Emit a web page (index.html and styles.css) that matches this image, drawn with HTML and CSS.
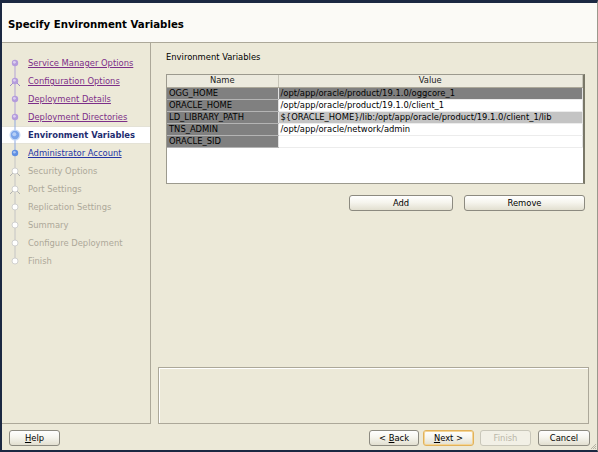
FILE: index.html
```html
<!DOCTYPE html>
<html>
<head>
<meta charset="utf-8">
<link rel="stylesheet" href="styles.css">
</head>
<body>
<div class="window">
  <div class="header"><span class="title">Specify Environment Variables</span></div>
  <div class="main">
    <div class="sidebar">
      <div class="step done first">
        <svg class="ico" width="26" height="18" viewBox="0 0 26 18"><line x1="13" y1="9" x2="13" y2="18" stroke="#b3a3d6"/><circle cx="13" cy="9" r="3.2" fill="#b49cdc"/><circle cx="12.4" cy="8.3" r="1.4" fill="#dccff0"/></svg>
        <a class="lbl">Service Manager Options</a>
      </div>
      <div class="step done">
        <svg class="ico" width="26" height="18" viewBox="0 0 26 18"><line x1="13" y1="0" x2="13" y2="18" stroke="#b3a3d6"/><line x1="13" y1="9" x2="8" y2="14" stroke="#9d8ac8"/><line x1="13" y1="9" x2="18" y2="14" stroke="#9d8ac8"/><circle cx="13" cy="9" r="3.2" fill="#b49cdc"/><circle cx="12.4" cy="8.3" r="1.4" fill="#dccff0"/></svg>
        <a class="lbl">Configuration Options</a>
      </div>
      <div class="step done">
        <svg class="ico" width="26" height="18" viewBox="0 0 26 18"><line x1="13" y1="0" x2="13" y2="18" stroke="#b3a3d6"/><circle cx="13" cy="9" r="3.2" fill="#b49cdc"/><circle cx="12.4" cy="8.3" r="1.4" fill="#dccff0"/></svg>
        <a class="lbl">Deployment Details</a>
      </div>
      <div class="step done">
        <svg class="ico" width="26" height="18" viewBox="0 0 26 18"><line x1="13" y1="0" x2="13" y2="9" stroke="#b3a3d6"/><line x1="13" y1="9" x2="13" y2="18" stroke="#8fa9e0"/><circle cx="13" cy="9" r="3.2" fill="#b49cdc"/><circle cx="12.4" cy="8.3" r="1.4" fill="#dccff0"/></svg>
        <a class="lbl">Deployment Directories</a>
      </div>
      <div class="step current">
        <svg class="ico" width="26" height="18" viewBox="0 0 26 18"><line x1="13" y1="0" x2="13" y2="18" stroke="#8fa9e0"/><circle cx="13" cy="9" r="5.5" fill="#c4d8f6"/><circle cx="13" cy="9" r="4.2" fill="#7aa4ea"/><circle cx="12.3" cy="8.2" r="2" fill="#b6cff6"/></svg>
        <span class="lbl">Environment Variables</span>
      </div>
      <div class="step next">
        <svg class="ico" width="26" height="18" viewBox="0 0 26 18"><line x1="13" y1="0" x2="13" y2="9" stroke="#8fa9e0"/><line x1="13" y1="9" x2="13" y2="18" stroke="#c4c4c4"/><circle cx="13" cy="9" r="3.2" fill="#5f8fe2"/><circle cx="12.4" cy="8.3" r="1.3" fill="#a9c4f2"/></svg>
        <a class="lbl">Administrator Account</a>
      </div>
      <div class="step todo">
        <svg class="ico" width="26" height="18" viewBox="0 0 26 18"><line x1="13" y1="0" x2="13" y2="18" stroke="#c4c4c4"/><line x1="13" y1="9" x2="8" y2="14" stroke="#b0b0b0"/><line x1="13" y1="9" x2="18" y2="14" stroke="#b0b0b0"/><circle cx="13" cy="9" r="3" fill="#ffffff" stroke="#c8c8c8" stroke-width="0.8"/></svg>
        <span class="lbl">Security Options</span>
      </div>
      <div class="step todo">
        <svg class="ico" width="26" height="18" viewBox="0 0 26 18"><line x1="13" y1="0" x2="13" y2="18" stroke="#c4c4c4"/><line x1="13" y1="9" x2="8" y2="14" stroke="#b0b0b0"/><line x1="13" y1="9" x2="18" y2="14" stroke="#b0b0b0"/><circle cx="13" cy="9" r="3" fill="#ffffff" stroke="#c8c8c8" stroke-width="0.8"/></svg>
        <span class="lbl">Port Settings</span>
      </div>
      <div class="step todo">
        <svg class="ico" width="26" height="18" viewBox="0 0 26 18"><line x1="13" y1="0" x2="13" y2="18" stroke="#c4c4c4"/><circle cx="13" cy="9" r="3" fill="#ffffff" stroke="#c8c8c8" stroke-width="0.8"/></svg>
        <span class="lbl">Replication Settings</span>
      </div>
      <div class="step todo">
        <svg class="ico" width="26" height="18" viewBox="0 0 26 18"><line x1="13" y1="0" x2="13" y2="18" stroke="#c4c4c4"/><circle cx="13" cy="9" r="3" fill="#ffffff" stroke="#c8c8c8" stroke-width="0.8"/></svg>
        <span class="lbl">Summary</span>
      </div>
      <div class="step todo">
        <svg class="ico" width="26" height="18" viewBox="0 0 26 18"><line x1="13" y1="0" x2="13" y2="18" stroke="#c4c4c4"/><circle cx="13" cy="9" r="3" fill="#ffffff" stroke="#c8c8c8" stroke-width="0.8"/></svg>
        <span class="lbl">Configure Deployment</span>
      </div>
      <div class="step todo">
        <svg class="ico" width="26" height="18" viewBox="0 0 26 18"><line x1="13" y1="0" x2="13" y2="9" stroke="#c4c4c4"/><circle cx="13" cy="9" r="3" fill="#ffffff" stroke="#c8c8c8" stroke-width="0.8"/></svg>
        <span class="lbl">Finish</span>
      </div>
    </div>
    <div class="content">
      <div class="section">
        <div class="caption">Environment Variables</div>
        <div class="tablebox">
          <table class="grid">
            <thead>
              <tr><th class="cname">Name</th><th class="cval">Value</th></tr>
            </thead>
            <tbody>
              <tr><td class="name">OGG_HOME</td><td class="val dark">/opt/app/oracle/product/19.1.0/oggcore_1</td></tr>
              <tr><td class="name">ORACLE_HOME</td><td class="val">/opt/app/oracle/product/19.1.0/client_1</td></tr>
              <tr><td class="name">LD_LIBRARY_PATH</td><td class="val light">${ORACLE_HOME}/lib:/opt/app/oracle/product/19.1.0/client_1/lib</td></tr>
              <tr><td class="name">TNS_ADMIN</td><td class="val">/opt/app/oracle/network/admin</td></tr>
              <tr><td class="name">ORACLE_SID</td><td class="val"></td></tr>
            </tbody>
          </table>
        </div>
        <div class="actions">
          <button class="btn add">Add</button>
          <button class="btn remove">Remove</button>
        </div>
      </div>
      <div class="message"></div>
    </div>
  </div>
  <div class="footer">
    <button class="btn help"><u>H</u>elp</button>
    <div class="nav">
      <button class="btn back">&lt; <u>B</u>ack</button>
      <button class="btn nextb"><u>N</u>ext &gt;</button>
      <button class="btn finish" disabled>Finish</button>
      <button class="btn cancel">Cancel</button>
    </div>
    <svg class="grip" width="8" height="8" viewBox="0 0 8 8"><path d="M7 2 L2 7 M7 4 L4 7 M7 6 L6 7" stroke="#a8a597" stroke-width="0.8"/></svg>
  </div>
</div>
</body>
</html>
```

FILE: styles.css
```css
* { box-sizing: border-box; }
html, body { margin: 0; padding: 0; }
body {
  width: 598px;
  height: 452px;
  overflow: hidden;
  font-family: "DejaVu Sans", "Noto Sans", sans-serif;
  font-size: 8.4px;
  color: #000;
}
.window {
  width: 598px;
  height: 452px;
  background: #ece9d8;
  border-top: 3px solid #1b2842;
  border-left: 2px solid #1b2842;
  border-bottom: 2px solid #1b2842;
  border-right: 1px solid #9a988c;
  display: flex;
  flex-direction: column;
  position: relative;
}
.header {
  height: 40px;
  background: #fbfaf6;
  border-bottom: 1px solid #aca899;
  padding: 0 0 0 6px;
  display: flex;
  align-items: center;
}
.title {
  font-weight: bold;
  font-size: 10.2px;
  margin-top: 3px;
}
.main {
  display: flex;
  height: 381px;
}
.sidebar {
  width: 149px;
  border-right: 1px solid #aca899;
  border-bottom: 1px solid #aca899;
  padding-top: 11px;
}
.step {
  height: 18px;
  display: flex;
  align-items: center;
}
.step .ico { flex: 0 0 26px; display: block; }
.step .lbl { white-space: nowrap; }
.step.done .lbl { color: #7d2f88; text-decoration: underline; }
.step.next .lbl { color: #2434a4; text-decoration: underline; }
.step.current {
  background: #ffffff;
  border-top: 1px solid #e4e2d6;
  border-bottom: 1px solid #e4e2d6;
}
.step.current .lbl { color: #1e2d70; font-weight: bold; }
.step.todo .lbl { color: #aca899; }
.content {
  flex: 1;
  display: flex;
  flex-direction: column;
  justify-content: space-between;
  padding: 0 8px 0 7px;
}
.section {
  padding: 8px 4px 0 8px;
}
.caption {
  height: 12px;
  line-height: 12px;
  margin-bottom: 11px;
}
.tablebox {
  width: 419px;
  height: 110px;
  background: #ffffff;
  border: 1px solid #9c9a8e;
  border-right: 2px solid #7a7868;
  overflow: hidden;
}
.grid {
  width: 100%;
  border-collapse: collapse;
  table-layout: fixed;
}
.grid th {
  font-weight: normal;
  height: 12px;
  line-height: 11px;
  padding: 0;
  background: #eceade;
  border-bottom: 1px solid #aca899;
  border-right: 1px solid #c7c5b8;
  text-align: center;
  color: #222;
}
.grid th.cname { width: 111px; }
.grid td {
  height: 12px;
  line-height: 11px;
  padding: 0 0 0 2px;
  border-bottom: 1px solid #ececec;
  border-right: 1px solid #e2e2e2;
  white-space: nowrap;
  overflow: hidden;
}
.grid td.name { background: #808080; border-bottom-color: #b4b4b4; }
.grid td.val.dark { background: #808080; }
.grid td.val.light { background: #c4c4c4; }
.actions {
  display: flex;
  justify-content: flex-end;
  gap: 11px;
  margin-top: 11px;
  width: 419px;
}
.btn {
  font-family: "DejaVu Sans", "Noto Sans", sans-serif;
  font-size: 8.4px;
  height: 16px;
  padding: 0;
  border: 1px solid #8c8a80;
  border-radius: 3px;
  background: linear-gradient(#ffffff 0%, #f6f5ee 45%, #e2dfd0 100%);
  color: #000;
  line-height: 14px;
}
.btn u { text-decoration: underline; }
.add { width: 104px; }
.remove { width: 121px; }
.message {
  height: 57px;
  border: 1px solid #aca899;
  box-shadow: inset 1px 1px 0 #ffffff;
  margin-bottom: 0;
}
.footer {
  flex: 1;
  display: flex;
  justify-content: space-between;
  align-items: flex-start;
  padding: 6px 7px 0 7px;
  position: relative;
}
.help { width: 51px; }
.nav {
  display: flex;
  gap: 4px;
}
.back { width: 50px; }
.nextb {
  width: 51px;
  border-color: #e2b25a;
  box-shadow: inset 0 0 0 1px #f4d596;
}
.finish {
  width: 51px;
  margin-left: 2px;
  color: #b9b6a8;
  border-color: #c9c7ba;
  background: #f2f0e6;
}
.cancel { width: 52px; margin-left: 3px; }
.grip {
  position: absolute;
  right: 0;
  bottom: 0;
}
```
